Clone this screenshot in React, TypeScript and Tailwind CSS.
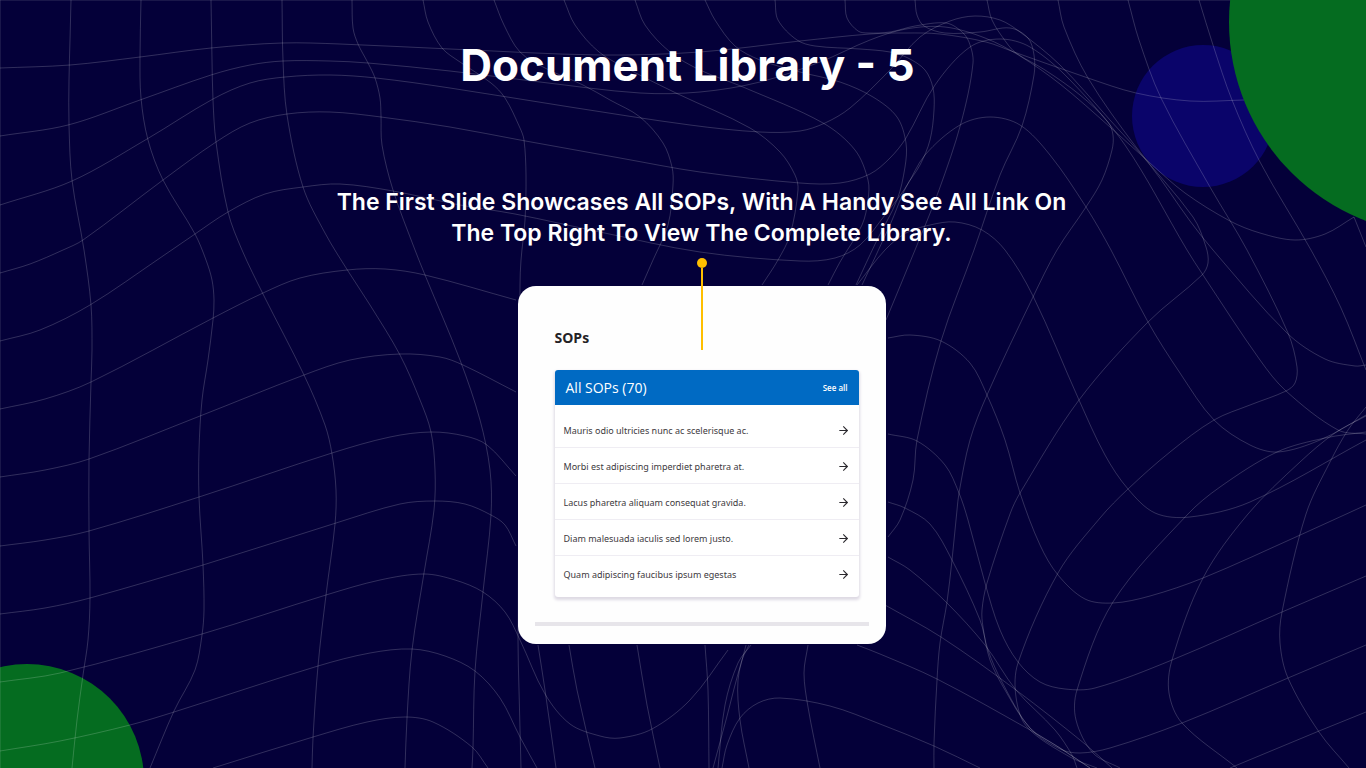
import React from 'react'
import { ArrowRight } from 'lucide-react'

type Line = number[]

interface SopItem {
  id: number
  title: string
}

const sops: SopItem[] = [
  { id: 1, title: 'Mauris odio ultricies nunc ac scelerisque ac.' },
  { id: 2, title: 'Morbi est adipiscing imperdiet pharetra at.' },
  { id: 3, title: 'Lacus pharetra aliquam consequat gravida.' },
  { id: 4, title: 'Diam malesuada iaculis sed lorem justo.' },
  { id: 5, title: 'Quam adipiscing faucibus ipsum egestas' },
]

// Mesh lines running top to bottom, as x, y pairs
const columns: Line[] = [
  [0, 0, 0, 768],
  [71, 0, 70, 40, 69, 80, 69, 125, 72, 180, 84, 250, 91, 305, 92, 350, 91, 382, 89, 460, 89, 530, 90, 598, 88, 640, 83, 675, 77, 720, 72, 768],
  [141, 0, 140, 57, 141, 98, 148, 140, 163, 180, 195, 234, 206, 260, 212, 280, 214, 300, 213, 320, 208, 360, 202, 400, 199, 450, 199, 497, 203, 565, 204, 610, 202, 635, 195, 670, 174, 711, 150, 768],
  [211, 0, 212, 60, 213, 100, 216, 142, 228, 212, 242, 250, 263, 294, 304, 375, 325, 425, 332, 454, 336, 490, 335, 524, 326, 595, 318, 666, 313, 738, 312, 768],
  [282, 0, 283, 60, 287, 115, 303, 187, 325, 233, 348, 271, 370, 305, 400, 355, 420, 400, 431, 432, 435, 470, 434, 510, 424, 573, 412, 650, 407, 718, 405, 768],
  [352, 0, 353, 28, 358, 44, 368, 63, 375, 78, 380, 98, 381, 116, 382, 145, 393, 190, 415, 250, 425, 275, 460, 360, 480, 420, 490, 470, 491, 515, 483, 592, 475, 671, 473, 748, 472, 768],
  [423, 0, 428, 22, 442, 48, 460, 62, 491, 83, 505, 98, 520, 128, 524, 140, 526, 175, 525, 220, 521, 260, 520, 285, 518, 640, 519, 690, 521, 768],
  [494, 0, 504, 25, 520, 52, 545, 68, 583, 85, 610, 100, 640, 117, 663, 143, 672, 167, 673, 185, 668, 225, 653, 260, 642, 285],
  [564, 0, 575, 25, 599, 52, 630, 70, 678, 94, 750, 128, 780, 152, 795, 175, 798, 190, 790, 235, 778, 260, 762, 285],
  [635, 0, 645, 25, 670, 52, 700, 70, 743, 87, 823, 123, 855, 150, 868, 180, 868, 200, 862, 225, 840, 262, 828, 285],
  [705, 0, 715, 20, 735, 46, 760, 60, 800, 72, 840, 82, 873, 97, 897, 117, 906, 143, 905, 167, 897, 200, 877, 240, 856, 285],
  [775, 0, 778, 20, 797, 40, 815, 46, 860, 49, 890, 52, 908, 58, 925, 70, 933, 88, 934, 110, 930, 140, 920, 165, 906, 187, 890, 225, 862, 285],
  [845, 0, 847, 18, 858, 31, 868, 33, 890, 32, 915, 26, 946, 23, 961, 31, 969, 42, 973, 63, 961, 123, 939, 190, 915, 250, 886, 320],
  [915, 0, 917, 15, 924, 26, 945, 33, 980, 32, 1010, 28, 1028, 38, 1034, 55, 1034, 75, 1022, 126, 1000, 175, 974, 250, 941, 341, 917, 440, 913, 480, 900, 520, 888, 537],
  [987, 0, 992, 20, 1006, 42, 1016, 53, 1045, 70, 1080, 95, 1108, 122, 1113, 135, 1112, 150, 1102, 180, 1086, 207, 1057, 250, 1033, 297, 987, 395, 970, 440, 959, 493, 957, 510, 952, 560, 947, 602, 940, 643, 937, 680, 934, 743, 934, 768],
  [1058, 0, 1064, 27, 1088, 78, 1136, 147, 1193, 217, 1206, 247, 1208, 263, 1202, 275, 1148, 322, 1079, 400, 1020, 493, 1010, 514, 987, 583, 982, 610, 983, 627, 990, 660, 1005, 690, 1030, 728, 1060, 748, 1090, 768],
  [1128, 0, 1139, 40, 1161, 98, 1210, 187, 1247, 250, 1288, 333, 1297, 367, 1295, 383, 1286, 391, 1250, 405, 1214, 420, 1170, 452, 1128, 489, 1100, 518, 1058, 573, 1018, 663, 1016, 697, 1027, 727, 1070, 757, 1097, 768],
  [1199, 0, 1213, 45, 1232, 100, 1260, 162, 1311, 250, 1341, 308, 1366, 370],
  [1354, 217, 1366, 247],
  [1366, 432, 1325, 438, 1277, 452, 1220, 487, 1187, 515, 1113, 602, 1077, 690, 1076, 720, 1093, 753, 1120, 768],
  [1366, 416, 1335, 433, 1300, 462, 1248, 514, 1203, 578, 1172, 660, 1169, 693, 1182, 723, 1237, 768],
  [1366, 407, 1348, 430, 1330, 462, 1306, 514, 1282, 612, 1280, 643, 1288, 678, 1319, 732, 1349, 768],
  [538, 645, 545, 690, 556, 768],
  [569, 645, 577, 690, 595, 768],
  [637, 645, 647, 705, 660, 768],
  [705, 645, 708, 690, 709, 768],
  [751, 645, 738, 663, 725, 705, 718, 768],
  [749, 645, 742, 660, 726, 720, 713, 768],
  [746, 645, 738, 680, 740, 720, 749, 768],
  [808, 645, 804, 673, 808, 707, 820, 768],
]

// Mesh lines running left to right
const rows: Line[] = [
  [0, 0, 1366, 0],
  [0, 68, 70, 65, 140, 57, 211, 48, 282, 43, 340, 44, 450, 49, 600, 55, 700, 52, 800, 41, 870, 34, 906, 33, 940, 34, 986, 42, 1014, 52, 1088, 78, 1136, 93, 1190, 101, 1244, 100],
  [0, 136, 68, 125, 140, 100, 211, 75, 250, 65, 283, 61, 330, 61, 368, 63, 450, 71, 540, 82, 640, 93, 700, 92, 760, 82, 820, 62, 870, 40, 906, 29, 945, 27, 985, 38, 1020, 56, 1060, 84, 1110, 127, 1150, 163, 1185, 193, 1230, 221, 1260, 233, 1295, 240, 1325, 234, 1354, 217],
  [0, 205, 72, 181, 147, 139, 213, 99, 250, 83, 285, 77, 330, 75, 376, 78, 450, 88, 570, 107, 690, 125, 760, 132, 800, 131, 825, 123, 850, 108, 890, 70, 920, 37, 950, 21, 975, 16, 1000, 20, 1020, 32, 1060, 65, 1110, 120, 1150, 165, 1190, 221, 1213, 250, 1287, 333, 1325, 359, 1355, 366, 1366, 365],
  [0, 273, 30, 264, 63, 250, 83, 240, 163, 180, 216, 142, 250, 123, 287, 114, 330, 112, 381, 117, 450, 127, 520, 140, 620, 158, 700, 172, 800, 183, 840, 183, 870, 174, 890, 158, 906, 138, 935, 85, 970, 47, 1000, 39, 1030, 47, 1070, 80, 1125, 145, 1187, 250, 1203, 275, 1260, 360, 1286, 391, 1338, 430, 1366, 434],
  [0, 341, 40, 330, 90, 305, 160, 258, 195, 234, 228, 212, 265, 194, 303, 187, 340, 184, 393, 191, 460, 205, 515, 214, 600, 232, 700, 252, 800, 261, 835, 258, 860, 245, 885, 215, 906, 187, 925, 155, 960, 125, 990, 117, 1020, 125, 1050, 155, 1086, 207, 1111, 250, 1148, 322, 1180, 373, 1214, 420, 1250, 445, 1278, 452, 1320, 440, 1366, 415],
  [0, 409, 45, 399, 91, 382, 213, 318, 263, 293, 300, 278, 347, 270, 385, 269, 425, 275, 516, 300],
  [857, 285, 885, 250, 906, 233, 930, 225, 955, 222, 982, 230, 1005, 250, 1033, 296, 1079, 400, 1105, 455, 1128, 489, 1155, 513, 1190, 517, 1250, 502, 1366, 440],
  [0, 477, 45, 470, 89, 459, 200, 416, 304, 375, 350, 360, 400, 354, 440, 357, 463, 365, 516, 392],
  [888, 338, 910, 335, 941, 341, 970, 363, 987, 395, 1005, 440, 1020, 493, 1040, 545, 1058, 575, 1085, 599, 1113, 603, 1150, 596, 1203, 578, 1298, 536, 1366, 505],
  [0, 546, 45, 540, 89, 531, 199, 497, 332, 453, 390, 437, 431, 432, 465, 436, 487, 445, 516, 476],
  [888, 434, 917, 441, 945, 465, 959, 493, 968, 520, 985, 583, 1000, 630, 1018, 662, 1040, 682, 1065, 689, 1095, 688, 1172, 660, 1282, 612, 1366, 576],
  [0, 614, 45, 608, 90, 598, 203, 565, 336, 523, 400, 504, 435, 501, 465, 504, 491, 515, 505, 525, 516, 546],
  [888, 502, 905, 508, 930, 524, 952, 560, 980, 620, 988, 650, 1002, 682, 1030, 728, 1060, 749, 1080, 753, 1110, 748, 1182, 723, 1288, 678, 1366, 645],
  [0, 682, 60, 673, 202, 634, 326, 595, 380, 580, 424, 574, 455, 580, 483, 592, 505, 612, 520, 640, 545, 694, 570, 724, 600, 736, 620, 738, 652, 729, 690, 700, 728, 650],
  [888, 557, 910, 570, 947, 603, 985, 645, 1016, 690, 1055, 730, 1072, 755, 1077, 768],
  [0, 751, 60, 741, 130, 725, 174, 712, 318, 666, 370, 653, 412, 649, 445, 656, 475, 671, 500, 698, 520, 737, 537, 768],
  [885, 605, 941, 637, 1016, 690, 1085, 744, 1112, 768],
  [213, 768, 313, 737, 367, 722, 405, 717, 433, 722, 472, 747, 488, 768],
  [857, 645, 880, 654, 937, 679, 1030, 730, 1060, 748, 1090, 768],
  [722, 768, 727, 745, 740, 718, 758, 703, 780, 698, 830, 706, 880, 724, 934, 746, 980, 768],
  [1230, 768, 1319, 731, 1366, 712],
]

// Smooth curve through every point of a line
const toPath = (line: Line) => {
  const last = line.length / 2 - 1
  const at = (i: number) => {
    const n = Math.max(0, Math.min(last, i))
    return [line[n * 2], line[n * 2 + 1]]
  }
  let d = `M${line[0]} ${line[1]}`
  for (let i = 0; i < last; i++) {
    const pts = [at(i - 1), at(i), at(i + 1), at(i + 2)]
    const dist = (a: number[], b: number[]) => Math.hypot(a[0] - b[0], a[1] - b[1])
    const seg = dist(pts[1], pts[2])
    // tangents are scaled to the segment so short ones don't overshoot
    const k1 = seg / (dist(pts[0], pts[1]) + seg) / 3
    const k2 = seg / (dist(pts[2], pts[3]) + seg) / 3
    const c1 = pts[1].map((v, j) => v + (pts[2][j] - pts[0][j]) * k1)
    const c2 = pts[2].map((v, j) => v - (pts[3][j] - pts[1][j]) * k2)
    d += `C${c1.join(' ')} ${c2.join(' ')} ${pts[2].join(' ')}`
  }
  return d
}

const Backdrop: React.FC = () => (
  <svg
    className="absolute inset-0 h-full w-full"
    viewBox="0 0 1366 768"
    preserveAspectRatio="xMidYMid slice"
    aria-hidden="true"
  >
    <circle cx="1203" cy="116" r="71" fill="#0a046a" />
    <circle cx="27" cy="781" r="117" fill="#056c20" />
    <g fill="none" stroke="#ffffff" strokeOpacity="0.18" strokeWidth="1">
      {[...columns, ...rows].map((line, i) => (
        <path key={i} d={toPath(line)} />
      ))}
    </g>
    <circle cx="1442" cy="22" r="213" fill="#056c20" />
  </svg>
)

const SopPanel: React.FC = () => (
  <div className="rounded-[3px] bg-white shadow-[0_2px_3px_1px_#dedae4]">
    <div className="flex h-[35px] items-center justify-between rounded-t-[3px] bg-[#006ac3] px-[11px] text-white">
      <h3 className="text-[14px] leading-[20px] font-medium">All SOPs (70)</h3>
      <a href="#all" className="text-[8px] leading-[12px] font-semibold">See all</a>
    </div>
    <ul className="pt-[7px] pb-[6px]">
      {sops.map(sop => (
        <li key={sop.id} className="border-b border-[#efedf3] last:border-b-0">
          <a href={`#sop-${sop.id}`} className="flex h-[35px] items-center justify-between px-[9px] pt-[2px] text-[#3d3a40]">
            <span className="font-['Noto_Sans',sans-serif] text-[9px] leading-[14px]">{sop.title}</span>
            <ArrowRight size={13} strokeWidth={2} className="text-[#2b292e]" />
          </a>
        </li>
      ))}
    </ul>
  </div>
)

export default function App() {
  return (
    <main className="relative min-h-screen overflow-hidden bg-[#040039] font-['Open_Sans','Noto_Sans',sans-serif]">
      <Backdrop />

      <div className="relative flex flex-col items-center pt-[39px] pb-[60px]">
        <h1 className="pl-[9px] text-center font-['Inter',sans-serif] text-[44px] leading-[52px] font-bold text-white">
          Document Library - 5
        </h1>

        <div className="flex flex-col items-center pt-[96px] pl-[37px]">
          <h2 className="text-center font-['Inter',sans-serif] text-[23px] leading-[31px] font-semibold text-white">
            The First Slide Showcases All SOPs, With A Handy See All Link On
            <br />
            The Top Right To View The Complete Library.
          </h2>

          <section className="relative mt-[37px] w-[368px] rounded-[18px] bg-[#fefefe] px-[17px] pb-[18px]">
            {/* Pointer from the caption into the card */}
            <div className="absolute -top-[28px] left-1/2 flex -translate-x-1/2 flex-col items-center">
              <span className="h-[10px] w-[10px] rounded-full bg-[#ffbf00]"></span>
              <span className="h-[82px] w-[2px] bg-[#ffbf00]"></span>
            </div>

            <div className="pt-[42px] pr-[10px] pb-[25px] pl-[20px]">
              <h3 className="mb-[22px] text-[14px] leading-[20px] font-bold text-[#242226]">SOPs</h3>
              <SopPanel />
            </div>
            <div className="h-[4px] bg-[#e7e5ea]"></div>
          </section>
        </div>
      </div>
    </main>
  )
}
